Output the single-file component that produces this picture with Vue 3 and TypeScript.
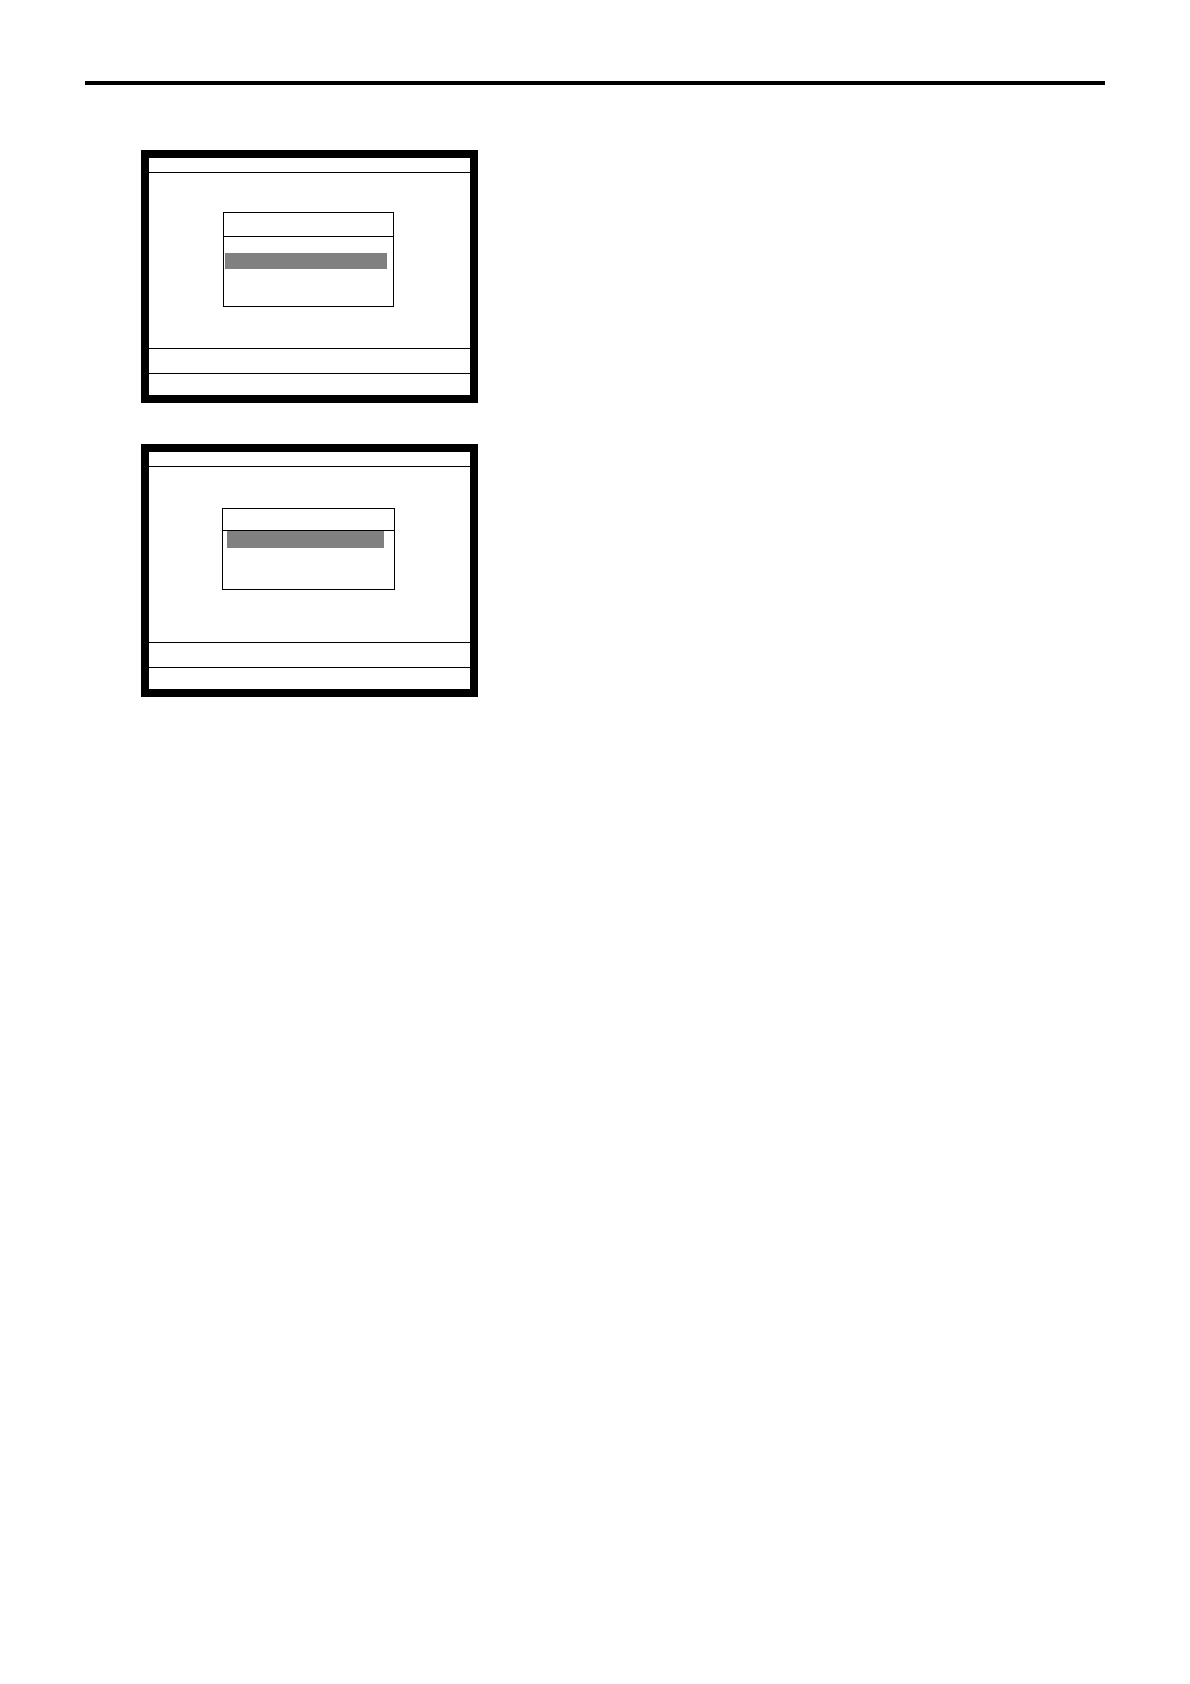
<script setup lang="ts">
interface Screen {
  id: number
  kind: 'tall' | 'short'
}

const screens: Screen[] = [
  { id: 1, kind: 'tall' },
  { id: 2, kind: 'short' },
]
</script>

<template>
  <main class="page">
    <hr class="rule" />
    <div class="screens">
      <section v-for="screen in screens" :key="screen.id" class="screen" :class="screen.kind">
        <header class="screen-title"></header>
        <div class="screen-body">
          <div class="menu">
            <div class="menu-title"></div>
            <div class="menu-list">
              <div class="selected"></div>
            </div>
          </div>
        </div>
        <div class="message"></div>
        <footer class="status"></footer>
      </section>
    </div>
  </main>
</template>

<style>
body {
  margin: 0;
  background: #fff;
}
</style>

<style scoped>
.page {
  box-sizing: border-box;
  min-height: 100vh;
  padding: 81px 85px;
  font-family: "Liberation Sans", sans-serif;
}

.rule {
  height: 4px;
  margin: 0;
  border: 0;
  background: #000;
}

.screens {
  display: flex;
  flex-direction: column;
  gap: 41px;
  padding: 65px 56px 0;
}

.screen {
  box-sizing: border-box;
  width: 100%;
  max-width: 337px;
  border: 8px solid #000;
}

.screen-title {
  min-height: 14px;
  border-bottom: 1px solid #000;
}

.screen-body {
  box-sizing: border-box;
  display: flex;
  align-items: flex-start;
  justify-content: center;
  min-height: 175px;
  padding: 39px 2px 0 0;
}

.message {
  min-height: 24px;
  border-top: 1px solid #000;
  border-bottom: 1px solid #000;
}

.status {
  min-height: 21px;
}

.menu {
  box-sizing: border-box;
  width: 100%;
  max-width: 171px;
  border: 1px solid #000;
}

.menu-title {
  min-height: 23px;
  border-bottom: 1px solid #000;
}

.menu-list {
  box-sizing: border-box;
  min-height: 69px;
  padding: 16px 6px 0 1px;
}

.selected {
  min-height: 16px;
  background: #808080;
}

.short .screen-body {
  padding-top: 41px;
}

.short .menu {
  max-width: 173px;
}

.short .menu-title {
  min-height: 21px;
}

.short .menu-list {
  min-height: 58px;
  padding: 0 10px 0 4px;
}

.short .selected {
  min-height: 17px;
}
</style>
